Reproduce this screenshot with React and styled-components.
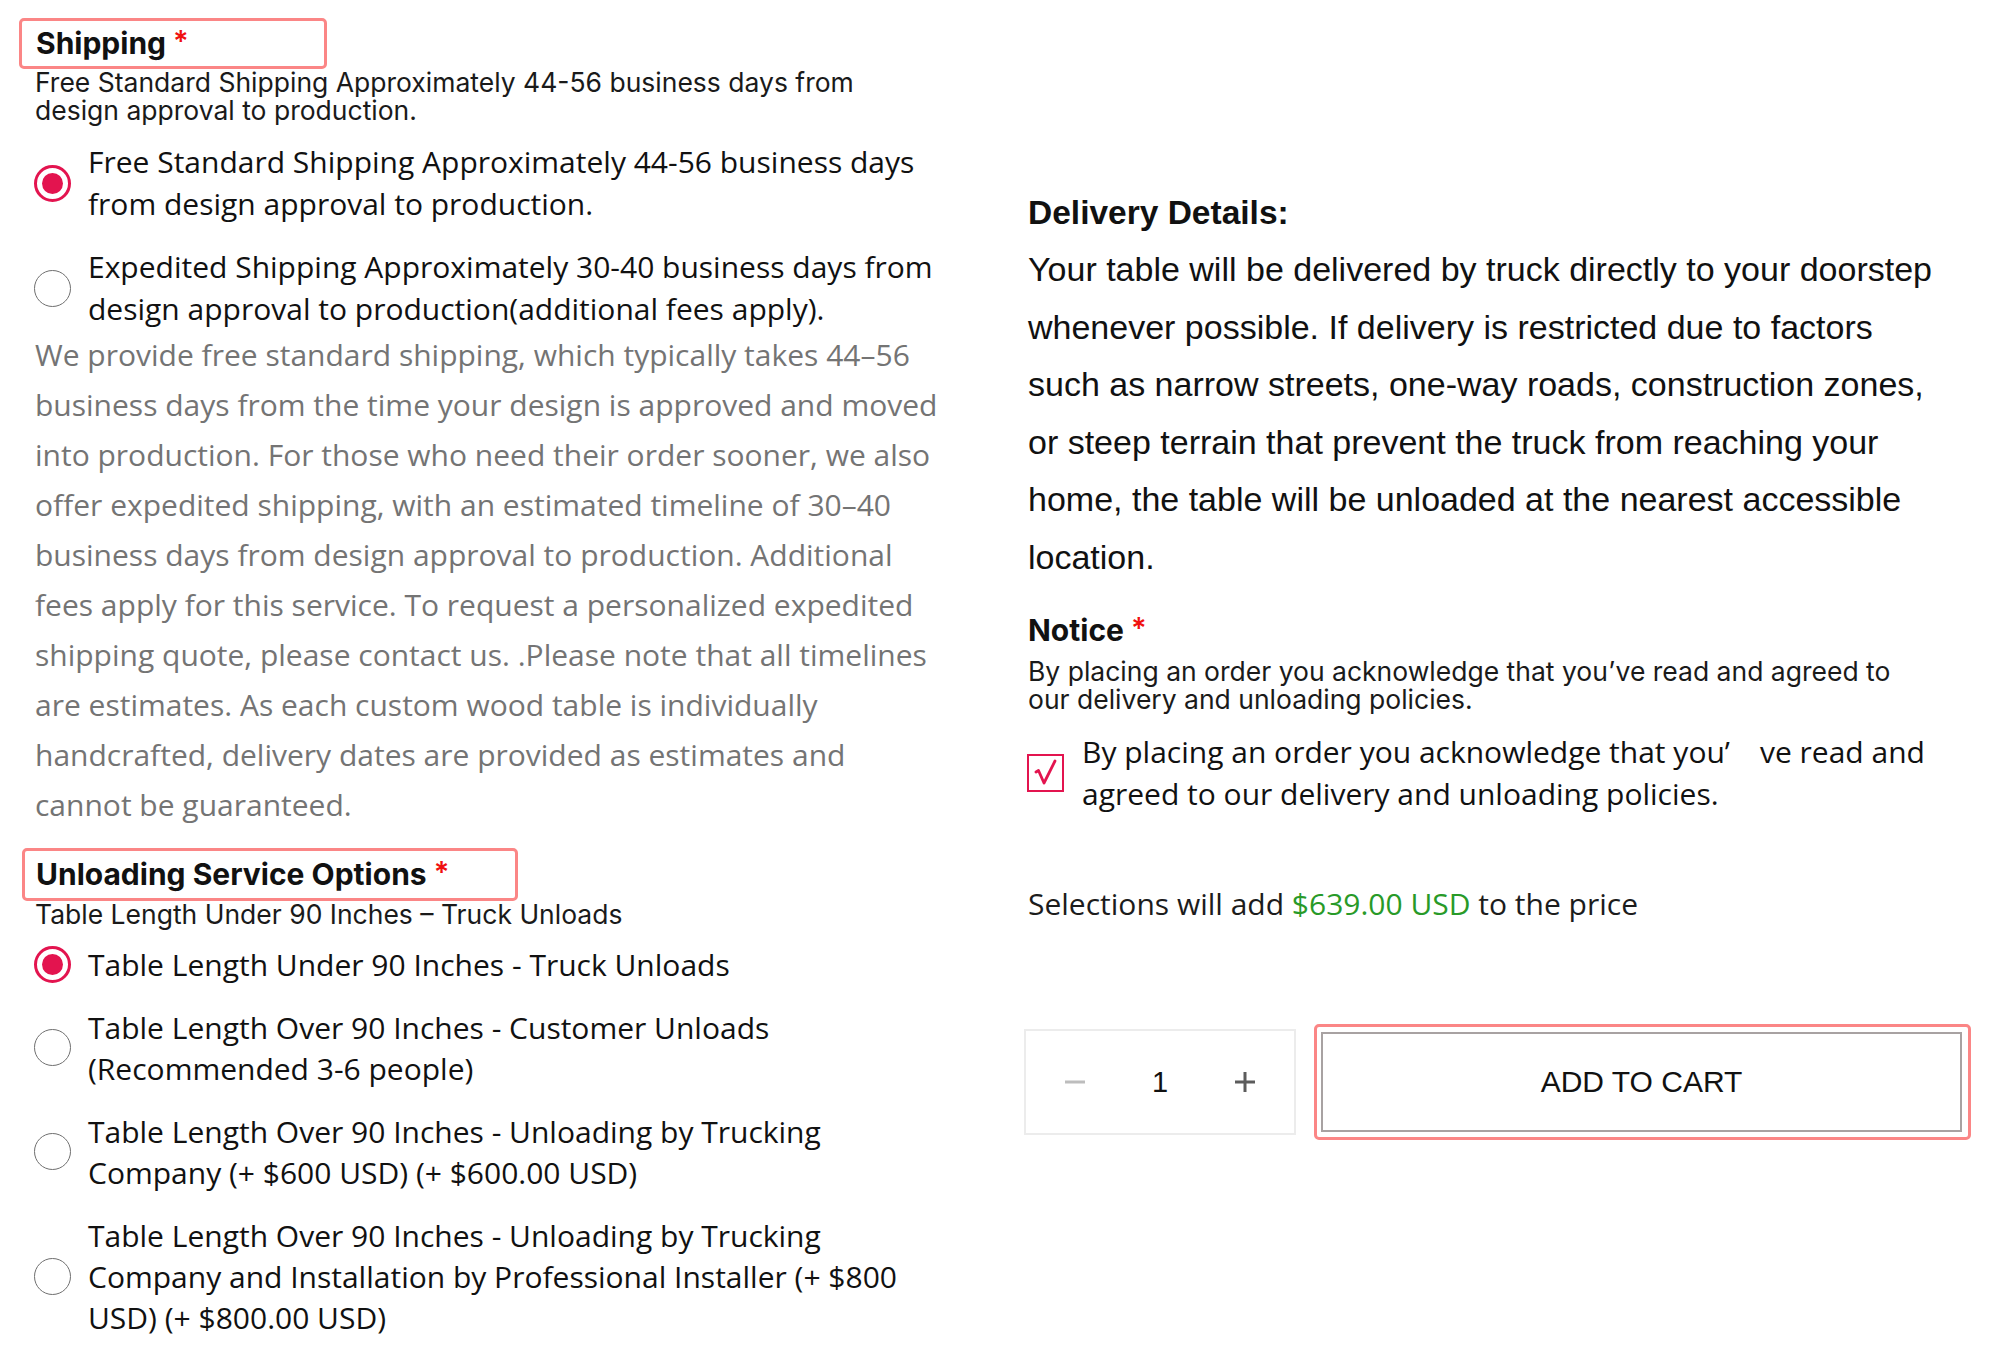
import React from "react";
import styled, { createGlobalStyle } from "styled-components";

const SEGOE = `"Open Sans", "Noto Sans", sans-serif`;
const DMSANS = `Inter, "Open Sans", sans-serif`;
const ARIAL = `"Liberation Sans", Arial, sans-serif`;
const CRIMSON = "#e3144f";

const GlobalStyle = createGlobalStyle`
  html, body {
    margin: 0;
    padding: 0;
    background: #fff;
  }
  body {
    font-family: ${SEGOE};
    color: #111;
  }
`;

const Page = styled.div`
  display: grid;
  grid-template-columns: 912px 918px;
  column-gap: 81px;
  padding: 18px 0 0 35px;
  box-sizing: border-box;
  width: 2000px;
  min-height: 1353px;
`;

const Column = styled.div`
  display: flex;
  flex-direction: column;
`;

const HeadingBox = styled.div`
  box-sizing: border-box;
  display: flex;
  align-items: center;
  width: ${(p) => p.$width}px;
  height: ${(p) => p.$height}px;
  margin-left: ${(p) => -p.$inset}px;
  padding-left: ${(p) => p.$inset - 2}px;
  border: 3px solid #fb8686;
  border-radius: 5px;
  margin-top: ${(p) => p.$top || 0}px;
`;

const Heading = styled.div`
  font-family: ${DMSANS};
  font-weight: 700;
  font-size: 30px;
  line-height: 36px;
  color: #111;
  margin-top: ${(p) => p.$top || 0}px;
`;

const Required = styled.span`
  color: #f01010;
  font-size: 29px;
  font-weight: 600;
  margin-left: 7px;
  position: relative;
  top: -3px;
`;

const Subtitle = styled.div`
  max-width: 890px;
  font-family: ${DMSANS};
  font-size: 26.5px;
  line-height: 27.5px;
  color: #1a1a1a;
  margin-top: ${(p) => p.$top || 0}px;
`;

const OptionText = styled.span`
  font-family: ${SEGOE};
  font-size: 30px;
  line-height: 42px;
  color: #111;
`;

const OptionList = styled.div`
  display: flex;
  flex-direction: column;
  gap: ${(p) => p.$gap || 21}px;
  margin-top: ${(p) => p.$top || 0}px;

  ${OptionText} {
    line-height: ${(p) => p.$leading || 42}px;
  }
`;

const OptionRow = styled.label`
  display: flex;
  align-items: center;
  gap: 17px;
  margin-left: -1px;
`;

const Radio = styled.span`
  flex: none;
  box-sizing: border-box;
  width: 37px;
  height: 37px;
  border-radius: 50%;
  border: ${(p) => (p.$checked ? `3px solid ${CRIMSON}` : "1.5px solid #6f6f6f")};
  display: flex;
  align-items: center;
  justify-content: center;

  &::after {
    content: "";
    display: ${(p) => (p.$checked ? "block" : "none")};
    width: 21px;
    height: 21px;
    border-radius: 50%;
    background: ${CRIMSON};
  }
`;

const Paragraph = styled.p`
  margin: 0;
  font-family: ${SEGOE};
  font-size: 30px;
  line-height: 50px;
  color: #747474;
`;

const DeliveryTitle = styled.div`
  margin-top: 166px;
  font-family: ${ARIAL};
  font-weight: 700;
  font-size: 33.5px;
  line-height: 57px;
  color: #111;
`;

const DeliveryBody = styled.p`
  margin: 0;
  font-family: ${ARIAL};
  font-size: 34px;
  line-height: 57.5px;
  color: #111;
`;

const CheckRow = styled.label`
  display: flex;
  align-items: center;
  gap: 18px;
  margin-top: 18px;
  margin-left: -1px;
`;

const CheckBox = styled.span`
  flex: none;
  box-sizing: border-box;
  width: 37px;
  height: 38px;
  border: 2px solid ${CRIMSON};
  display: flex;
  align-items: center;
  justify-content: center;
`;

const Selections = styled.div`
  margin-top: 68px;
  font-family: ${SEGOE};
  font-size: 30px;
  line-height: 42px;
  color: #1c1c1c;
`;

const Price = styled.span`
  color: #289a28;
`;

const CartRow = styled.div`
  display: flex;
  align-items: center;
  gap: 18px;
  margin-top: 99px;
  margin-left: -4px;
`;

const Quantity = styled.div`
  flex: none;
  box-sizing: border-box;
  width: 272px;
  height: 106px;
  border: 2px solid #ececec;
  display: grid;
  grid-template-columns: 1fr 1fr 1fr;
  align-items: center;
  justify-items: center;
  padding: 0 6px;
`;

const QtyButton = styled.span`
  display: flex;
  align-items: center;
  justify-content: center;
  width: 40px;
  height: 40px;
`;

const QtyValue = styled.span`
  font-family: ${ARIAL};
  font-size: 29px;
  color: #111;
`;

const Highlight = styled.div`
  flex: none;
  box-sizing: border-box;
  width: 657px;
  height: 116px;
  border: 3px solid #fb8686;
  border-radius: 5px;
  padding: 5px 6px 5px 4px;
  display: flex;
`;

const CartButton = styled.button`
  flex: 1;
  background: #fff;
  border: 2px solid #a8a2a2;
  font-family: ${ARIAL};
  font-size: 30px;
  color: #111;
  cursor: pointer;
`;

const Option = ({ checked, children }) => (
  <OptionRow>
    <Radio $checked={checked} />
    <OptionText>{children}</OptionText>
  </OptionRow>
);

export default function App() {
  return (
    <>
      <GlobalStyle />
      <Page>
        <Column>
          <HeadingBox $width={308} $height={51} $inset={16}>
            <Heading>
              Shipping<Required>*</Required>
            </Heading>
          </HeadingBox>
          <Subtitle>
            Free Standard Shipping Approximately 44-56 business days from design approval to production.
          </Subtitle>
          <OptionList $top={17}>
            <Option checked>
              Free Standard Shipping Approximately 44-56 business days from design approval to production.
            </Option>
            <Option>
              Expedited Shipping Approximately 30-40 business days from design approval to
              production(additional fees apply).
            </Option>
          </OptionList>
          <Paragraph>
            We provide free standard shipping, which typically takes 44–56 business days from the time
            your design is approved and moved into production. For those who need their order sooner, we
            also offer expedited shipping, with an estimated timeline of 30–40 business days from design
            approval to production. Additional fees apply for this service. To request a personalized
            expedited shipping quote, please contact us. .Please note that all timelines are estimates.
            As each custom wood table is individually handcrafted, delivery dates are provided as
            estimates and cannot be guaranteed.
          </Paragraph>

          <HeadingBox $width={496} $height={53} $inset={13} $top={18}>
            <Heading>
              Unloading Service Options<Required>*</Required>
            </Heading>
          </HeadingBox>
          <Subtitle>Table Length Under 90 Inches – Truck Unloads</Subtitle>
          <OptionList $top={15} $leading={41} $gap={22}>
            <Option checked>Table Length Under 90 Inches - Truck Unloads</Option>
            <Option>Table Length Over 90 Inches - Customer Unloads (Recommended 3-6 people)</Option>
            <Option>
              Table Length Over 90 Inches - Unloading by Trucking Company (+ $600 USD) (+ $600.00 USD)
            </Option>
            <Option>
              Table Length Over 90 Inches - Unloading by Trucking Company and Installation by
              Professional Installer (+ $800 USD) (+ $800.00 USD)
            </Option>
          </OptionList>
        </Column>

        <Column>
          <DeliveryTitle>Delivery Details:</DeliveryTitle>
          <DeliveryBody>
            Your table will be delivered by truck directly to your doorstep whenever possible. If
            delivery is restricted due to factors such as narrow streets, one-way roads, construction
            zones, or steep terrain that prevent the truck from reaching your home, the table will be
            unloaded at the nearest accessible location.
          </DeliveryBody>

          <Heading $top={26}>
            Notice<Required>*</Required>
          </Heading>
          <Subtitle $top={9}>
            By placing an order you acknowledge that you’ve read and agreed to our delivery and
            unloading policies.
          </Subtitle>
          <CheckRow>
            <CheckBox>
              <svg width="26" height="30" viewBox="0 0 26 30" fill="none">
                <path
                  d="M3 14 L5.5 12.5 L11 25 L22 3"
                  stroke={CRIMSON}
                  strokeWidth="2.8"
                  strokeLinecap="round"
                  strokeLinejoin="round"
                />
              </svg>
            </CheckBox>
            <OptionText>
              {"By placing an order you acknowledge that you’\u2003ve read and agreed to our delivery and unloading policies."}
            </OptionText>
          </CheckRow>

          <Selections>
            Selections will add <Price>$639.00 USD</Price> to the price
          </Selections>

          <CartRow>
            <Quantity>
              <QtyButton>
                <svg width="22" height="22" viewBox="0 0 22 22">
                  <path d="M1 11 H21" stroke="#bdbdbd" strokeWidth="3" />
                </svg>
              </QtyButton>
              <QtyValue>1</QtyValue>
              <QtyButton>
                <svg width="22" height="22" viewBox="0 0 22 22">
                  <path d="M1 11 H21 M11 1 V21" stroke="#5c5c5c" strokeWidth="3" />
                </svg>
              </QtyButton>
            </Quantity>
            <Highlight>
              <CartButton>ADD TO CART</CartButton>
            </Highlight>
          </CartRow>
        </Column>
      </Page>
    </>
  );
}
